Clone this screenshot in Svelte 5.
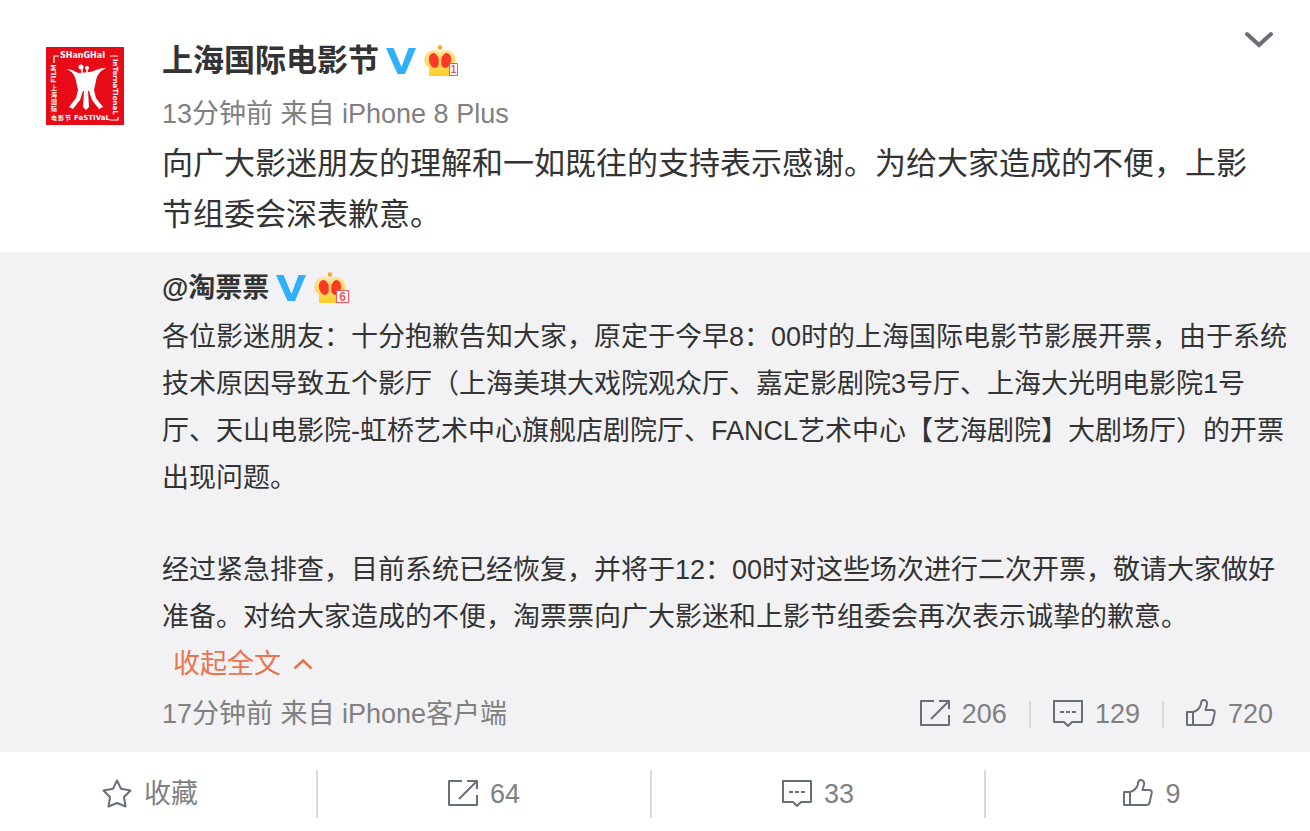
<script>
  const post = {
    name: "上海国际电影节",
    level: 1,
    time: "13分钟前",
    source: "iPhone 8 Plus",
    text: "向广大影迷朋友的理解和一如既往的支持表示感谢。为给大家造成的不便，上影节组委会深表歉意。",
  };

  const quote = {
    name: "@淘票票",
    level: 6,
    time: "17分钟前",
    source: "iPhone客户端",
    paragraphs: [
      "各位影迷朋友：十分抱歉告知大家，原定于今早8：00时的上海国际电影节影展开票，由于系统技术原因导致五个影厅（上海美琪大戏院观众厅、嘉定影剧院3号厅、上海大光明电影院1号厅、天山电影院-虹桥艺术中心旗舰店剧院厅、FANCL艺术中心【艺海剧院】大剧场厅）的开票出现问题。",
      "经过紧急排查，目前系统已经恢复，并将于12：00时对这些场次进行二次开票，敬请大家做好准备。对给大家造成的不便，淘票票向广大影迷和上影节组委会再次表示诚挚的歉意。",
    ],
    stats: [
      { icon: "share", label: "转发", value: "206" },
      { icon: "comment", label: "评论", value: "129" },
      { icon: "like", label: "赞", value: "720" },
    ],
  };

  const actions = [
    { icon: "star", label: "收藏", value: "收藏" },
    { icon: "share", label: "转发", value: "64" },
    { icon: "comment", label: "评论", value: "33" },
    { icon: "like", label: "赞", value: "9" },
  ];
</script>

{#snippet icon(name)}
  <svg class="icon" viewBox="0 0 30 30" width="30" height="30" aria-hidden="true">
    {#if name === "share"}
      <path d="M14 2H1v24h28V16M19 2h10v8M28 3 11 20" />
    {:else if name === "comment"}
      <path d="M1 2h28v21H19l-4 4-4-4H1z" />
      <path d="M7 13h4m2 0h4m2 0h4" />
    {:else if name === "like"}
      <path d="M1 13h6v13H1zM7 13c4-1 7-4 8-8 0-3 1-4 3-4s3.500 2 3 4.500L19.500 11H26c2 0 3 1 2.700 3l-2 9c-.4 2-1.200 3-3 3H7" />
    {:else}
      <path d="m15 1.500 4 8.300 9.500 1.700-6.500 6.500 1.500 9.500-8.500-3.500L6.500 27.500 8 18l-6.500-6.500L11 9.800z" />
    {/if}
  </svg>
{/snippet}

{#snippet badges(level)}
  <svg class="vip" viewBox="0 0 30 27" width="30" height="27" aria-hidden="true">
    <path d="M0 0h7.500l8 19L22.500 0H30L19 26h-7.500z" fill="#30b0fa" />
  </svg>
  <svg class="crown" viewBox="0 0 37 32" width="37" height="32" aria-hidden="true">
    <defs>
      <linearGradient id="gold{level}" x1="0" y1="0" x2="0" y2="1">
        <stop offset="0" stop-color="#ffe4a0" />
        <stop offset="1" stop-color="#ffcf25" />
      </linearGradient>
    </defs>
    <path d="M5 31v-9C1 20 0 17 .5 13 2 7 7 4 12 5l4 2 4-2c5-1 10 2 11.500 8 .5 4-.5 7-4.500 9v9z" fill="url(#gold{level})" />
    <circle cx="16" cy="2.500" r="2.300" fill="#faa52f" />
    <ellipse cx="10" cy="15.500" rx="5" ry="7.500" transform="rotate(-12 10 15.500)" fill="#fa3a26" />
    <ellipse cx="22" cy="15.500" rx="5" ry="7.500" transform="rotate(12 22 15.500)" fill="#fa3a26" />
    <path d="M15 21c-.5-5-.5-9 1-11 1.500 2 1.500 6 1 11z" fill="#ffd95c" />
    {#if level > 1}
      <path d="M22.500 18.500h12v12h-12z" fill="#fff" stroke="#f5525a" />
      <text x="28.500" y="29" text-anchor="middle">{level}</text>
    {:else}
      <path d="M25.500 18.500h8v12h-8z" fill="#fff" stroke="#f5525a" />
      <text x="29.500" y="28" text-anchor="middle" class="one">{level}</text>
    {/if}
  </svg>
{/snippet}

<article>
  <div class="post">
    <a class="avatar" href="#profile" aria-label={post.name}>
      <svg viewBox="0 0 78 78" width="78" height="78">
        <path d="M0 0h78v78H0z" fill="#e60b17" />
        <path d="M8 16V9h5M64 9h8M72 70v3h-9" fill="none" stroke="#fff" stroke-width="1.200" />
        <!-- goblet -->
        <path d="M20 22c8 0 9 4 14 4l10-1c5-1 8-4 16-4-6 3-9 7-10 13l-2 9 2 8 7 9-4 2-7-9-3-9h-1l1 16-3 3-3-3 1-16h-1l-3 9-7 9-4-2 7-9 2-8-2-9c-1-6-4-10-10-12z" fill="#fff" />
        <path d="M36 27v-6M41 27v-4" stroke="#fff" stroke-width="1.500" />
        <circle cx="35" cy="20" r="2.500" fill="#fff" />
        <circle cx="41" cy="21" r="2" fill="#fff" />
        <path d="M34 28h6v10h-6z" fill="#fff" />
        <g class="logo-text">
          <text x="14" y="11">SHanGHaI</text>
          <text class="side" transform="translate(67 12) rotate(90)">InTernaTIonaL</text>
          <text class="side" x="28" y="73">FeSTIVaL</text>
          <text class="side" transform="translate(10 36) rotate(-90)">FILM</text>
          <text class="cn" x="5" y="43">上</text>
          <text class="cn" x="5" y="50">海</text>
          <text class="cn" x="5" y="57">国</text>
          <text class="cn" x="5" y="64">际</text>
          <text class="cn" x="5" y="73">电</text>
          <text class="cn" x="12" y="73">影</text>
          <text class="cn" x="19" y="73">节</text>
        </g>
      </svg>
    </a>
    <div class="content">
      <div class="title">
        <a class="name" href="#profile">{post.name}</a>
        {@render badges(post.level)}
      </div>
      <div class="meta">{post.time} 来自 {post.source}</div>
      <p class="text">{post.text}</p>
    </div>
    <button class="more" aria-label="更多">
      <svg viewBox="0 0 30 18" width="30" height="18">
        <path d="m3 3 12 11L27 3" fill="none" stroke="#696e78" stroke-width="4" stroke-linecap="round" />
      </svg>
    </button>
  </div>

  <div class="quote">
    <div class="title small">
      <a class="name" href="#quote">{quote.name}</a>
      {@render badges(quote.level)}
    </div>
    <div class="quote-text">
      {#each quote.paragraphs as paragraph}
        <p>{paragraph}</p>
      {/each}
    </div>
    <button class="fold">
      收起全文
      <svg viewBox="0 0 20 12" width="20" height="12" aria-hidden="true">
        <path d="m1.500 9.500 8.500-8 8.500 8" fill="none" stroke="#eb7350" stroke-width="2.600" />
      </svg>
    </button>
    <div class="quote-foot">
      <div class="meta">{quote.time} 来自 {quote.source}</div>
      <div class="stats">
        {#each quote.stats as stat}
          <button aria-label="{stat.label} {stat.value}">
            {@render icon(stat.icon)}
            <span>{stat.value}</span>
          </button>
        {/each}
      </div>
    </div>
  </div>

  <div class="actions">
    {#each actions as action}
      <button aria-label="{action.label} {action.value}">
        {@render icon(action.icon)}
        <span>{action.value}</span>
      </button>
    {/each}
  </div>
</article>

<style>
  :global(body) {
    background: #fff;
  }

  article {
    overflow: hidden;
    color: #333;
    font-family: "Liberation Sans", "Noto Sans CJK SC", sans-serif;
    font-size: 27px;
    text-spacing-trim: space-all;
  }
  a {
    color: inherit;
    text-decoration: none;
  }
  p {
    margin: 0;
  }
  button {
    padding: 0;
    border: 0;
    background: none;
    color: #808080;
    font: inherit;
    cursor: pointer;
  }
  svg {
    display: block;
    flex: none;
  }

  /* post */
  .post {
    display: flex;
    align-items: flex-start;
    padding: 44px 36px 12px 46px;
  }
  .avatar {
    flex: none;
    margin: 3px 38px 0 0;
  }
  .logo-text {
    fill: #fff;
    font-family: "DejaVu Sans", "Noto Sans CJK SC", sans-serif;
    font-size: 8px;
    font-weight: bold;
  }
  .logo-text .side {
    font-size: 7px;
  }
  .logo-text .cn {
    font-size: 6px;
  }
  .content {
    flex: 1;
    /* the text runs on below the menu arrow */
    margin-right: -30px;
  }
  .title {
    display: flex;
    align-items: center;
    height: 34px;
    font-size: 31px;
    font-weight: bold;
  }
  .title .name {
    line-height: 34px;
  }
  .title.small {
    font-size: 27px;
  }
  .vip {
    margin: 0 8px 0 7px;
  }
  .crown text {
    fill: #f5525a;
    font-size: 12px;
    font-weight: bold;
  }
  .crown text.one {
    font-size: 10px;
  }
  .meta {
    color: #808080;
    line-height: 36px;
  }
  .post .meta {
    margin: 18px 0 6px;
  }
  .text {
    padding-right: 15px;
    font-size: 31px;
    line-height: 51px;
  }
  .more {
    margin-top: -13px;
  }

  /* forwarded post */
  .quote {
    padding: 19px 22px 20px 162px;
    background: #f2f2f5;
  }
  .quote-text {
    margin-top: 9px;
    line-height: 47px;
  }
  .quote-text p + p {
    margin-top: 45px;
  }
  .fold {
    display: flex;
    align-items: center;
    gap: 12px;
    margin-left: 11px;
    color: #eb7350;
    line-height: 47px;
  }
  .quote-foot {
    display: flex;
    justify-content: space-between;
    margin-top: 8px;
    padding-right: 15px;
  }
  .icon {
    fill: none;
    stroke: #696e78;
    stroke-width: 2;
    stroke-linejoin: round;
  }
  .stats {
    display: flex;
    align-items: center;
  }
  .stats button {
    display: flex;
    align-items: center;
    gap: 12px;
    height: 27px;
    line-height: 27px;
  }
  .stats button + button {
    margin-left: 22px;
    padding-left: 22px;
    border-left: 2px solid #d9d9d9;
  }

  /* action bar */
  .actions {
    display: grid;
    grid-template-columns: repeat(4, 1fr);
    margin: 0 -10px 0 -16px;
    padding: 18px 0 13px;
  }
  .actions button {
    display: flex;
    align-items: center;
    justify-content: center;
    gap: 12px;
    height: 48px;
    border-right: 2px solid #d9d9d9;
    line-height: 36px;
  }
  .actions button:last-child {
    border-right-color: transparent;
  }
</style>
